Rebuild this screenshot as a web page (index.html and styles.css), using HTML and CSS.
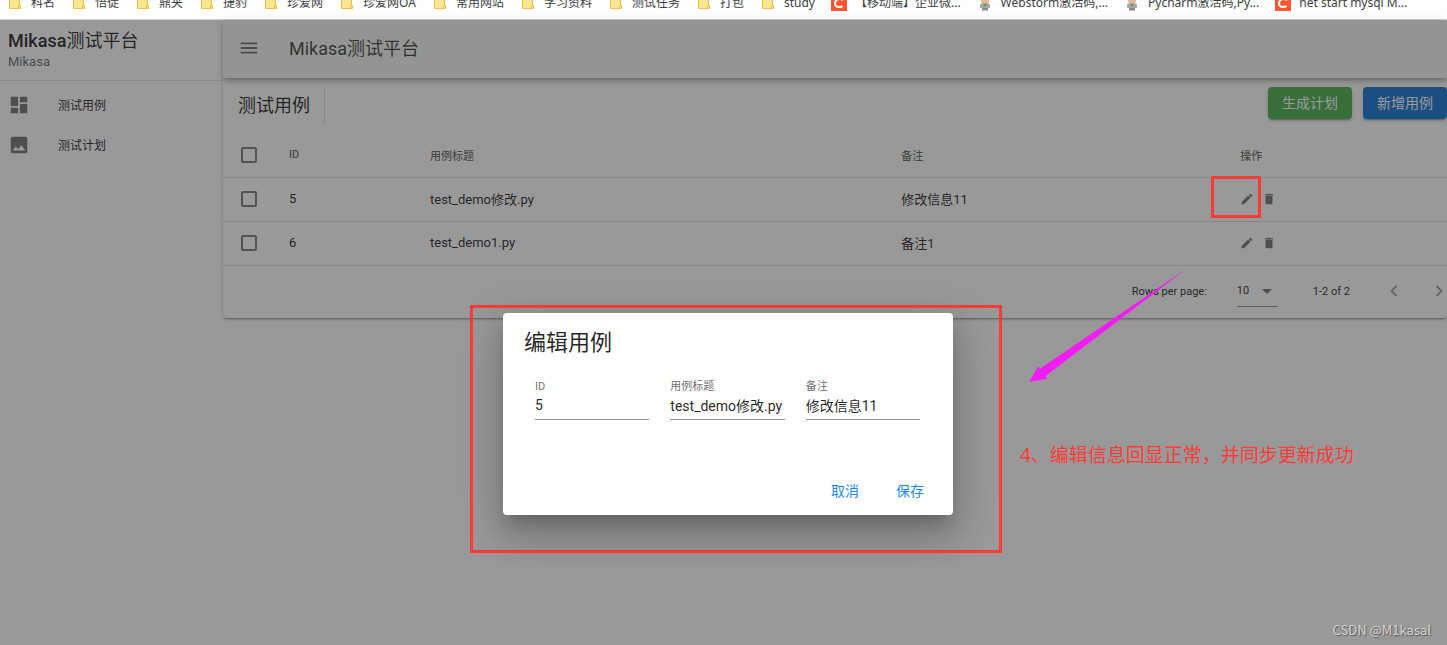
FILE: index.html
```html
<!DOCTYPE html>
<html lang="zh-CN">
<head>
<meta charset="utf-8">
<title>Mikasa测试平台</title>
<link rel="stylesheet" href="styles.css">
</head>
<body>
<svg class="defs" aria-hidden="true">
  <symbol id="folder" viewBox="0 0 16 16"><path d="M2.5 2.5h10v8h1v3h-11z" fill="#ffe694" stroke="#e9c04c"/><path d="M11.5 13V10.5h1.500" fill="none" stroke="#e9c04c"/></symbol>
  <symbol id="csdn" viewBox="0 0 16 16"><path d="M0 0h16v16H0z" fill="#fc5531"/><path d="M12 5.200C11 4.300 9.800 4 8.600 4 6 4 4.300 5.600 4.100 8.200c-.2 2.500 1.300 3.900 3.900 3.900 1.300 0 2.500-.3 3.500-.9" fill="none" stroke="#fff" stroke-width="2"/></symbol>
  <symbol id="person" viewBox="0 0 16 16"><path d="M4 3h8v4l-1.500 2h-5L4 7z" fill="#e8b896"/><path d="M3 9.500 6 8h4l3 1.500V13H3z" fill="#a4a8a6"/><path d="M6 9h4l-2 3z" fill="#6c9a55"/><path d="M5 13h6v2.500H5z" fill="#8a8a8a"/><path d="M4 0h8v4H4z" fill="#75706d"/></symbol>
  <symbol id="menu" viewBox="0 0 24 24"><path d="M3 6h18v2H3zM3 11h18v2H3zM3 16h18v2H3z"/></symbol>
  <symbol id="dashboard" viewBox="0 0 24 24"><path d="M13 3v6h8V3m-8 18h8V11h-8M3 21h8v-6H3m0-2h8V3H3z"/></symbol>
  <symbol id="image" viewBox="0 0 24 24"><path d="m8.500 13.500 2.500 3 3.500-4.500 4.500 6H5m16 1V5a2 2 0 0 0-2-2H5a2 2 0 0 0-2 2v14a2 2 0 0 0 2 2h14a2 2 0 0 0 2-2z"/></symbol>
  <symbol id="pencil" viewBox="0 0 24 24"><path d="M20.710 7.040c.39-.39.39-1.040 0-1.410l-2.340-2.340c-.37-.39-1.020-.39-1.410 0l-1.840 1.830 3.750 3.750M3 17.250V21h3.750L17.810 9.930l-3.750-3.750z"/></symbol>
  <symbol id="trash" viewBox="0 0 24 24"><path d="M19 4h-3.500l-1-1h-5l-1 1H5v2h14M6 19a2 2 0 0 0 2 2h8a2 2 0 0 0 2-2V7H6z"/></symbol>
  <symbol id="prev" viewBox="0 0 16 16"><path d="m10.500 3-5 5 5 5" fill="none" stroke="currentColor" stroke-width="1.800"/></symbol>
  <symbol id="next" viewBox="0 0 16 16"><path d="m5.500 3 5 5-5 5" fill="none" stroke="currentColor" stroke-width="1.800"/></symbol>
</svg>

<nav class="bookmarks" aria-label="书签">
  <a href="#"><svg><use href="#folder"/></svg>科名</a>
  <a href="#"><svg><use href="#folder"/></svg>悟徒</a>
  <a href="#"><svg><use href="#folder"/></svg>鼎夹</a>
  <a href="#"><svg><use href="#folder"/></svg>捷豹</a>
  <a href="#"><svg><use href="#folder"/></svg>珍爱网</a>
  <a href="#"><svg><use href="#folder"/></svg>珍爱网OA</a>
  <a href="#"><svg><use href="#folder"/></svg>常用网站</a>
  <a href="#"><svg><use href="#folder"/></svg>学习资料</a>
  <a href="#"><svg><use href="#folder"/></svg>测试任务</a>
  <a href="#"><svg><use href="#folder"/></svg>打包</a>
  <a href="#"><svg><use href="#folder"/></svg>study</a>
  <a href="#"><svg><use href="#csdn"/></svg>【移动端】企业微...</a>
  <a href="#"><svg><use href="#person"/></svg>Webstorm激活码,...</a>
  <a href="#"><svg><use href="#person"/></svg>Pycharm激活码,Py...</a>
  <a href="#"><svg><use href="#csdn"/></svg>net start mysql M...</a>
</nav>

<div class="app">
  <aside class="sidebar">
    <header class="brand">
      <strong class="brand-name">Mikasa<span>测试平台</span></strong>
      <span class="brand-sub">Mikasa</span>
    </header>
    <nav class="side-nav">
      <a href="#"><svg class="icon"><use href="#dashboard"/></svg><span>测试用例</span></a>
      <a href="#"><svg class="icon"><use href="#image"/></svg><span>测试计划</span></a>
    </nav>
  </aside>

  <div class="content">
    <header class="app-bar">
      <button class="plain" aria-label="菜单"><svg class="icon"><use href="#menu"/></svg></button>
      <span>Mikasa测试平台</span>
    </header>

    <main class="card">
      <div class="toolbar">
        <h1>测试用例</h1>
        <div class="toolbar-actions">
          <button class="btn green">生成计划</button>
          <button class="btn blue">新增用例</button>
        </div>
      </div>

      <table>
        <thead>
          <tr>
            <th class="col-check"><input type="checkbox" aria-label="全选"></th>
            <th class="col-id">ID</th>
            <th class="col-title">用例标题</th>
            <th class="col-note">备注</th>
            <th>操作</th>
          </tr>
        </thead>
        <tbody>
          <tr>
            <td class="check"><input type="checkbox" aria-label="选择 5"></td>
            <td>5</td>
            <td>test_demo修改.py</td>
            <td>修改信息11</td>
            <td class="ops"><div class="row-actions">
              <button class="plain" aria-label="编辑"><svg><use href="#pencil"/></svg></button>
              <button class="plain" aria-label="删除"><svg><use href="#trash"/></svg></button>
            </div></td>
          </tr>
          <tr>
            <td class="check"><input type="checkbox" aria-label="选择 6"></td>
            <td>6</td>
            <td>test_demo1.py</td>
            <td>备注1</td>
            <td class="ops"><div class="row-actions">
              <button class="plain" aria-label="编辑"><svg><use href="#pencil"/></svg></button>
              <button class="plain" aria-label="删除"><svg><use href="#trash"/></svg></button>
            </div></td>
          </tr>
        </tbody>
      </table>

      <footer class="pager">
        <label for="rows">Rows per page:</label>
        <span class="select"><select id="rows"><option>10</option></select></span>
        <span class="range">1-2 of 2</span>
        <div class="pager-nav">
          <button class="plain" aria-label="上一页"><svg><use href="#prev"/></svg></button>
          <button class="plain" aria-label="下一页"><svg><use href="#next"/></svg></button>
        </div>
      </footer>
    </main>
  </div>

  <div class="scrim"></div>

  <form class="dialog" role="dialog" aria-labelledby="dialog-title">
    <h2 id="dialog-title">编辑用例</h2>
    <div class="fields">
      <div class="field"><label for="f-id">ID</label><input id="f-id" type="text" value="5"></div>
      <div class="field"><label for="f-title">用例标题</label><input id="f-title" type="text" value="test_demo修改.py"></div>
      <div class="field"><label for="f-note">备注</label><input id="f-note" type="text" value="修改信息11"></div>
    </div>
    <div class="dialog-actions">
      <button type="button">取消</button>
      <button type="button">保存</button>
    </div>
  </form>

  <div class="mark mark-edit"></div>
  <div class="mark mark-dialog"></div>
  <svg class="arrow" viewBox="0 0 158 114"><path d="M0 113 9.500 97l1.500 2.700L157 0 16.300 107.300l2 2.400z" fill="#f41cf4"/></svg>
  <p class="note">4、编辑信息回显正常，并同步更新成功</p>
  <span class="watermark">CSDN @M1kasal</span>
</div>
</body>
</html>
```

FILE: styles.css
```css
* { box-sizing: border-box; }

body {
  margin: 0;
  min-height: 100vh;
  display: flex;
  flex-direction: column;
  overflow: hidden;
  font-family: Roboto, "Noto Sans CJK SC", sans-serif;
  font-size: 13px;
  color: rgba(0, 0, 0, .87);
}

a { color: inherit; text-decoration: none; }
svg { display: block; flex: none; fill: currentColor; }
button, input, select { font: inherit; color: inherit; }
.defs { position: absolute; width: 0; height: 0; }
.plain { padding: 0; border: 0; background: none; color: rgba(0, 0, 0, .54); cursor: pointer; }
.icon { width: 22px; height: 22px; color: rgba(0, 0, 0, .54); }

/* Bookmark strip */
.bookmarks {
  height: 20px;
  display: flex;
  align-items: flex-end;
  gap: 16px;
  padding: 0 7px 7px;
  overflow: hidden;
  background: #fff;
  border-bottom: 1px solid #d0d4d4;
  font-family: "Noto Sans", "Noto Sans CJK SC", sans-serif;
  font-size: 12px;
  line-height: 18px;
  color: #3c4043;
  white-space: nowrap;
}
.bookmarks a { display: flex; align-items: center; gap: 8px; }
.bookmarks svg { width: 16px; height: 16px; }

/* Shell */
.app { position: relative; flex: 1; display: flex; background: #fff; }
.sidebar { width: 223px; flex: none; }
.content { flex: 1; min-width: 0; }

.brand {
  display: flex;
  flex-direction: column;
  padding: 8px 8px 10px;
  border-bottom: 1px solid rgba(0, 0, 0, .12);
}
.brand-name { font-size: 18px; line-height: 26px; font-weight: 500; }
.brand-name span { font-weight: 400; }
.brand-sub { line-height: 16px; color: rgba(0, 0, 0, .6); }

.side-nav { display: flex; flex-direction: column; gap: 4px; padding: 6px 8px; }
.side-nav a { display: flex; align-items: center; gap: 28px; height: 36px; font-size: 12px; }
.side-nav span { padding-bottom: 2px; }

.app-bar {
  position: relative;
  display: flex;
  align-items: center;
  gap: 29px;
  height: 58px;
  padding: 0 15px 3px;
  background: #f5f5f5;
  box-shadow: 0 2px 4px -1px rgba(0, 0, 0, .2), 0 4px 5px rgba(0, 0, 0, .14), 0 1px 9px rgba(0, 0, 0, .12);
  color: rgba(0, 0, 0, .75);
  font-size: 18px;
}
.app-bar span { padding-bottom: 2px; }

.card {
  border-radius: 4px;
  box-shadow: 0 3px 1px -2px rgba(0, 0, 0, .2), 0 2px 2px rgba(0, 0, 0, .14), 0 1px 5px rgba(0, 0, 0, .12);
}
.toolbar { display: flex; align-items: center; justify-content: space-between; height: 55px; padding-left: 15px; }
.toolbar h1 {
  margin: 0;
  padding-right: 14px;
  border-right: 1px solid rgba(0, 0, 0, .12);
  font-size: 18px;
  line-height: 36px;
  font-weight: 400;
}
.toolbar-actions { display: flex; gap: 11px; padding-bottom: 6px; }
.btn {
  height: 32px;
  padding: 0 14px 2px;
  border: 0;
  border-radius: 4px;
  color: #fff;
  font-size: 14px;
  box-shadow: 0 3px 1px -2px rgba(0, 0, 0, .2), 0 2px 2px rgba(0, 0, 0, .14), 0 1px 5px rgba(0, 0, 0, .12);
}
.green { background: #4caf50; }
.blue { background: #1976d2; }

table { width: 100%; border-collapse: collapse; table-layout: fixed; }
th, td {
  height: 44px;
  padding: 0 14px;
  border-bottom: 1px solid rgba(0, 0, 0, .12);
  text-align: left;
}
td { padding-bottom: 2px; }
th, .check, .ops { padding-bottom: 0; }
th { font-size: 11px; font-weight: 500; color: rgba(0, 0, 0, .6); }
.col-check { width: 52px; }
.col-id { width: 141px; }
.col-title { width: 38.5%; }
.col-note { width: 27.7%; }
input[type="checkbox"] {
  appearance: none;
  display: block;
  width: 16px;
  height: 16px;
  margin: 0 4px;
  border: 2px solid rgba(0, 0, 0, .5);
  border-radius: 2px;
}
.row-actions { display: flex; gap: 8px; }
.row-actions svg { width: 14px; height: 14px; }

.pager { display: flex; align-items: center; justify-content: flex-end; height: 52px; padding-bottom: 1px; font-size: 11px; }
.select { position: relative; margin: 0 35px 0 30px; padding-top: 4px; }
.select select {
  appearance: none;
  width: 41px;
  height: 28px;
  padding: 0 0 4px;
  border: 0;
  border-bottom: 1px solid rgba(0, 0, 0, .42);
  border-radius: 0;
  background: none;
}
.select::after {
  content: "";
  position: absolute;
  right: 6px;
  top: 14px;
  border: 5px solid transparent;
  border-top-color: rgba(0, 0, 0, .54);
  border-bottom: 0;
}
.pager-nav { display: flex; gap: 29px; margin-left: 36px; }
.pager-nav svg { width: 16px; height: 16px; color: rgba(0, 0, 0, .38); }

/* Dialog layer */
.scrim { position: absolute; inset: 0; background: rgba(33, 33, 33, .46); }
.dialog {
  position: absolute;
  left: 503px;
  top: 293px;
  width: 450px;
  padding: 14px 14px 9px 21px;
  border-radius: 4px;
  background: #fff;
  box-shadow: 0 10px 14px -6px rgba(0, 0, 0, .2), 0 22px 34px 3px rgba(0, 0, 0, .14), 0 8px 41px 7px rgba(0, 0, 0, .12);
}
.dialog h2 { margin: 0; font-size: 22px; line-height: 32px; font-weight: 400; }
.fields { display: grid; grid-template-columns: repeat(3, 1fr); gap: 21px; padding: 20px 19px 0 11px; }
.field { display: flex; flex-direction: column; min-width: 0; }
.field label { font-size: 11px; line-height: 16px; color: rgba(0, 0, 0, .6); }
.field input {
  width: 100%;
  height: 25px;
  padding: 0 0 4px;
  border: 0;
  border-bottom: 1px solid rgba(0, 0, 0, .42);
  background: none;
  font-size: 14px;
}
.dialog-actions { display: flex; justify-content: flex-end; gap: 7px; padding-top: 54px; }
.dialog-actions button {
  width: 58px;
  height: 32px;
  padding: 0;
  border: 0;
  background: none;
  color: #1e88e5;
  font-size: 14px;
}

/* Annotations over the page */
.mark { position: absolute; border: 3px solid #ff3b38; pointer-events: none; }
.mark-edit { left: 1211px; top: 156px; width: 50px; height: 42px; }
.mark-dialog { left: 470px; top: 285px; width: 532px; height: 248px; }
.arrow { position: absolute; left: 1029px; top: 249px; width: 158px; height: 114px; }
.note {
  position: absolute;
  left: 1020px;
  top: 421px;
  margin: 0;
  color: #ff3b38;
  font-family: "Noto Sans", "Noto Sans CJK SC", sans-serif;
  font-size: 19px;
  line-height: 28px;
  white-space: nowrap;
}
.watermark {
  position: absolute;
  right: 16px;
  bottom: 7px;
  color: #d4d4d4;
  font-family: "Noto Sans CJK SC", sans-serif;
  font-size: 13px;
  line-height: 16px;
  text-shadow: 1px 1px 1px #555;
}
```
